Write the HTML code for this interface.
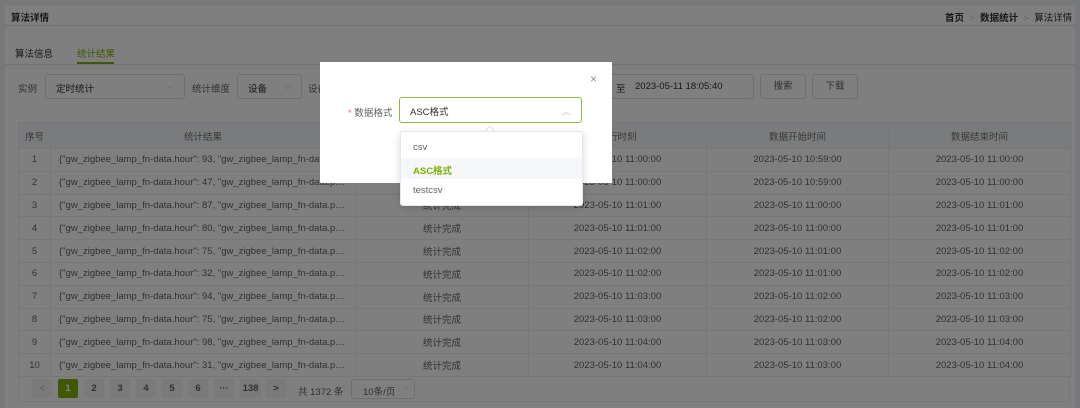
<!DOCTYPE html>
<html><head><meta charset="utf-8"><style>
*{margin:0;padding:0;box-sizing:border-box}
body{width:1080px;height:408px;overflow:hidden;background:#eef0f3;font-family:"Liberation Sans","Noto Sans CJK SC",sans-serif;font-size:9.5px;color:#606266;position:relative;white-space:nowrap}
.a{position:absolute}
.card{left:5px;top:5px;width:1070px;height:403px;background:#fff}
.inp{border:1px solid #dcdfe6;border-radius:3px;background:#fff}
table{border-collapse:collapse;position:absolute;left:18px;top:122px;width:1052px;table-layout:fixed}
td,th{border:1px solid #ebeef5;height:22.8px;padding:0;text-align:center;font-weight:normal;white-space:nowrap;overflow:hidden;font-size:9.5px;color:#606266}
th{background:#f5f7fa;height:26px;color:#707070}
td.l{text-align:left;padding-left:8px}
.pg{top:379px;width:20px;height:19px;background:#f4f4f5;border-radius:2px;text-align:center;line-height:19px;font-weight:bold;color:#606266}
.ov{left:0;top:0;width:1080px;height:408px;background:rgba(0,0,0,.5)}
</style></head><body>
<div class="a card"></div>
<div class="a" style="left:5px;top:25px;width:1070px;height:1px;background:#e4e7ed"></div>
<div class="a" style="left:11px;top:10px;font-weight:bold;color:#303133">算法详情</div>
<div class="a" style="left:945px;top:10px;color:#303133"><b>首页</b> <span style="color:#c0c4cc">&nbsp;&gt;&nbsp;</span> <b>数据统计</b> <span style="color:#c0c4cc">&nbsp;&gt;&nbsp;</span> 算法详情</div>
<div class="a" style="left:15px;top:46px;color:#303133">算法信息</div>
<div class="a" style="left:77px;top:46px;color:#7cb305">统计结果</div>
<div class="a" style="left:77px;top:62px;width:37px;height:2px;background:#7cb305"></div>
<div class="a" style="left:5px;top:64px;width:1070px;height:1px;background:#e4e7ed"></div>
<div class="a" style="left:18px;top:81px">实例</div>
<div class="a inp" style="left:45px;top:74px;width:140px;height:25px;padding:6px 10px;color:#303133">定时统计<span style="float:right;color:#c0c4cc">⌵</span></div>
<div class="a" style="left:192px;top:81px">统计维度</div>
<div class="a inp" style="left:237px;top:74px;width:65px;height:25px;padding:6px 10px;color:#303133">设备<span style="float:right;color:#c0c4cc">⌵</span></div>
<div class="a" style="left:308px;top:81px">设备</div>
<div class="a inp" style="left:560px;top:74px;width:194px;height:25px"></div>
<div class="a" style="left:635px;top:81px;color:#303133">2023-05-11 18:05:40</div>
<div class="a" style="left:616px;top:81px;color:#303133">至</div>
<div class="a inp" style="left:760px;top:74px;width:46px;height:25px;text-align:center;line-height:23px">搜索</div>
<div class="a inp" style="left:812px;top:74px;width:46px;height:25px;text-align:center;line-height:23px">下载</div>
<table>
<colgroup><col style="width:32px"><col style="width:305px"><col style="width:173px"><col style="width:178px"><col style="width:182px"><col style="width:182px"></colgroup>
<tr><th>序号</th><th>统计结果</th><th>状态</th><th>执行时刻</th><th>数据开始时间</th><th>数据结束时间</th></tr>
<tr><td>1</td><td class="l">{"gw_zigbee_lamp_fn-data.hour": 93, "gw_zigbee_lamp_fn-data.p…</td><td>统计完成</td><td>2023-05-10 11:00:00</td><td>2023-05-10 10:59:00</td><td>2023-05-10 11:00:00</td></tr>
<tr><td>2</td><td class="l">{"gw_zigbee_lamp_fn-data.hour": 47, "gw_zigbee_lamp_fn-data.p…</td><td>统计完成</td><td>2023-05-10 11:00:00</td><td>2023-05-10 10:59:00</td><td>2023-05-10 11:00:00</td></tr>
<tr><td>3</td><td class="l">{"gw_zigbee_lamp_fn-data.hour": 87, "gw_zigbee_lamp_fn-data.p…</td><td>统计完成</td><td>2023-05-10 11:01:00</td><td>2023-05-10 11:00:00</td><td>2023-05-10 11:01:00</td></tr>
<tr><td>4</td><td class="l">{"gw_zigbee_lamp_fn-data.hour": 80, "gw_zigbee_lamp_fn-data.p…</td><td>统计完成</td><td>2023-05-10 11:01:00</td><td>2023-05-10 11:00:00</td><td>2023-05-10 11:01:00</td></tr>
<tr><td>5</td><td class="l">{"gw_zigbee_lamp_fn-data.hour": 75, "gw_zigbee_lamp_fn-data.p…</td><td>统计完成</td><td>2023-05-10 11:02:00</td><td>2023-05-10 11:01:00</td><td>2023-05-10 11:02:00</td></tr>
<tr><td>6</td><td class="l">{"gw_zigbee_lamp_fn-data.hour": 32, "gw_zigbee_lamp_fn-data.p…</td><td>统计完成</td><td>2023-05-10 11:02:00</td><td>2023-05-10 11:01:00</td><td>2023-05-10 11:02:00</td></tr>
<tr><td>7</td><td class="l">{"gw_zigbee_lamp_fn-data.hour": 94, "gw_zigbee_lamp_fn-data.p…</td><td>统计完成</td><td>2023-05-10 11:03:00</td><td>2023-05-10 11:02:00</td><td>2023-05-10 11:03:00</td></tr>
<tr><td>8</td><td class="l">{"gw_zigbee_lamp_fn-data.hour": 75, "gw_zigbee_lamp_fn-data.p…</td><td>统计完成</td><td>2023-05-10 11:03:00</td><td>2023-05-10 11:02:00</td><td>2023-05-10 11:03:00</td></tr>
<tr><td>9</td><td class="l">{"gw_zigbee_lamp_fn-data.hour": 98, "gw_zigbee_lamp_fn-data.p…</td><td>统计完成</td><td>2023-05-10 11:04:00</td><td>2023-05-10 11:03:00</td><td>2023-05-10 11:04:00</td></tr>
<tr><td>10</td><td class="l">{"gw_zigbee_lamp_fn-data.hour": 31, "gw_zigbee_lamp_fn-data.p…</td><td>统计完成</td><td>2023-05-10 11:04:00</td><td>2023-05-10 11:03:00</td><td>2023-05-10 11:04:00</td></tr>
</table>
<div class="a" style="left:18px;top:376px;width:1052px;height:26px;border:1px solid #ebeef5;border-top:none"></div>
<div class="a pg" style="left:32px;color:#c0c4cc">&lt;</div>
<div class="a pg" style="left:58px;background:#7cb305;color:#fff">1</div>
<div class="a pg" style="left:84px">2</div>
<div class="a pg" style="left:110px">3</div>
<div class="a pg" style="left:136px">4</div>
<div class="a pg" style="left:162px">5</div>
<div class="a pg" style="left:188px">6</div>
<div class="a pg" style="left:214px">···</div>
<div class="a pg" style="left:240px;width:21px">138</div>
<div class="a pg" style="left:266px">&gt;</div>
<div class="a" style="left:298px;top:384px">共 1372 条</div>
<div class="a inp" style="left:351px;top:379px;width:64px;height:20px"></div>
<div class="a" style="left:363px;top:384px">10条/页</div>
<div class="a" style="left:403px;top:383px;color:#c0c4cc;font-size:8px">⌵</div>
<div class="a ov"></div>
<div class="a" style="left:320px;top:62px;width:292px;height:121px;background:#fff"></div>
<div class="a" style="left:590px;top:72px;font-size:12px;color:#909399">×</div>
<div class="a" style="left:348px;top:105px;color:#606266"><span style="color:#f56c6c">*</span> 数据格式</div>
<div class="a" style="left:399px;top:97px;width:183px;height:26px;border:1px solid #8cbb3c;border-radius:3px;background:#fff;padding:6px 10px;color:#303133">ASC格式<span style="float:right;color:#c0c4cc">︿</span></div>
<div class="a" style="left:486px;top:127px;width:8px;height:8px;background:#fff;transform:rotate(45deg);border-left:1px solid #e4e7ed;border-top:1px solid #e4e7ed"></div>
<div class="a" style="left:400px;top:131px;width:183px;height:75px;background:#fff;border:1px solid #e4e7ed;border-radius:3px;box-shadow:0 2px 8px rgba(0,0,0,.15)"></div>
<div class="a" style="left:413px;top:142px;color:#606266">csv</div>
<div class="a" style="left:401px;top:158px;width:181px;height:21px;background:#f5f7fa"></div>
<div class="a" style="left:413px;top:163px;color:#7cb305;font-weight:bold">ASC格式</div>
<div class="a" style="left:413px;top:185px;color:#606266">testcsv</div>
</body></html>
